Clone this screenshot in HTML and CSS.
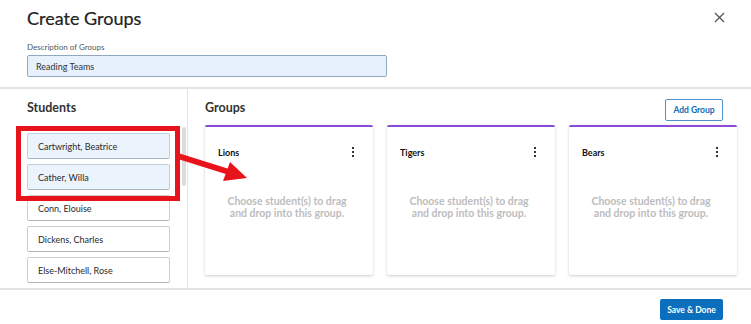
FILE: index.html
```html
<!DOCTYPE html>
<html lang="en">

<head>
    <meta charset="UTF-8">
    <meta name="viewport" content="width=device-width, initial-scale=1.0">
    <title>Create Groups</title>
    <link rel="stylesheet" href="styles.css">
</head>

<body>
    <div class="modal">
        <div class="header">
            <h1 class="title">Create Groups</h1>
            <button class="closeBtn" aria-label="Close">
                <svg width="11" height="11" viewBox="0 0 11 11">
                    <path d="M1 1 L10 10 M10 1 L1 10" stroke="#555" stroke-width="1.3" fill="none" />
                </svg>
            </button>
            <label class="descLabel" for="desc">Description of Groups</label>
            <input type="text" id="desc" class="descInput" value="Reading Teams">
        </div>

        <div class="main">
            <div class="students">
                <h2 class="panelTitle">Students</h2>
                <div class="studentList">
                    <div class="student selected">Cartwright, Beatrice</div>
                    <div class="student selected">Cather, Willa</div>
                    <div class="student">Conn, Elouise</div>
                    <div class="student">Dickens, Charles</div>
                    <div class="student">Else-Mitchell, Rose</div>
                    <div class="student"></div>
                </div>
                <div class="scrollThumb"></div>
            </div>

            <div class="groups">
                <div class="groupsHead">
                    <h2 class="panelTitle">Groups</h2>
                    <button class="addBtn">Add Group</button>
                </div>
                <div class="cards">
                    <div class="card">
                        <div class="cardHead">
                            <span class="cardName">Lions</span>
                            <span class="kebab"><i></i><i></i><i></i></span>
                        </div>
                        <p class="empty">Choose student(s) to drag and drop into this group.</p>
                    </div>
                    <div class="card">
                        <div class="cardHead">
                            <span class="cardName">Tigers</span>
                            <span class="kebab"><i></i><i></i><i></i></span>
                        </div>
                        <p class="empty">Choose student(s) to drag and drop into this group.</p>
                    </div>
                    <div class="card">
                        <div class="cardHead">
                            <span class="cardName">Bears</span>
                            <span class="kebab"><i></i><i></i><i></i></span>
                        </div>
                        <p class="empty">Choose student(s) to drag and drop into this group.</p>
                    </div>
                </div>
            </div>
        </div>

        <div class="footer">
            <button class="saveBtn">Save &amp; Done</button>
        </div>
    </div>

    <!-- annotation drawn over the screenshot -->
    <div class="highlight"></div>
    <svg class="arrow" width="751" height="324" viewBox="0 0 751 324">
        <line x1="178" y1="156" x2="229" y2="172" stroke="#e8141c" stroke-width="6" />
        <polygon points="247,178 223,181 230,162" fill="#e8141c" />
    </svg>
</body>

</html>
```

FILE: styles.css
```css
body {
    margin: 0;
    padding: 0;
    font-family: 'Lato', 'Open Sans', sans-serif;
    background-color: #fff;
    color: #333;
}

.modal {
    width: 751px;
    height: 324px;
    overflow: hidden;
}

.header {
    position: relative;
    padding: 7px 27px 10px;
    display: flex;
    flex-direction: column;
    align-items: flex-start;
}

.title {
    margin: 0;
    font-size: 18px;
    line-height: 22px;
    font-weight: 400;
    color: #222;
    -webkit-text-stroke: 0.2px #222;
}

.closeBtn {
    position: absolute;
    top: 12px;
    right: 26px;
    padding: 0;
    border: none;
    background: none;
    width: 11px;
    height: 11px;
    cursor: pointer;
}

.closeBtn svg {
    display: block;
}

.descLabel {
    margin-top: 13px;
    font-size: 8px;
    line-height: 10px;
    color: #555;
}

.descInput {
    margin-top: 3px;
    width: 360px;
    height: 22px;
    box-sizing: border-box;
    padding: 0 8px;
    border: 1px solid #8fa9c3;
    border-radius: 2px;
    background-color: #e7f1fc;
    font-family: inherit;
    font-size: 9px;
    color: #333;
}

.main {
    display: flex;
    height: 199px;
    border-top: 2px solid #e3e3e3;
    border-bottom: 2px solid #e3e3e3;
}

.students {
    position: relative;
    width: 188px;
    box-sizing: border-box;
    padding: 11px 17px 0 27px;
    border-right: 1px solid #e3e3e3;
    overflow: hidden;
}

.panelTitle {
    margin: 0;
    font-size: 12.5px;
    line-height: 16px;
    font-weight: 700;
    color: #333;
}

.groupsHead .panelTitle {
    margin-top: 1px;
}

.studentList {
    margin-top: 17px;
    display: flex;
    flex-direction: column;
    gap: 5px;
}

.student {
    height: 26px;
    box-sizing: border-box;
    padding-left: 10px;
    display: flex;
    align-items: center;
    flex-shrink: 0;
    border: 1px solid #cfcfcf;
    border-bottom-color: #b5b5b5;
    border-radius: 2px;
    background-color: #fff;
    font-size: 9px;
    color: #2a2a2a;
}

.student.selected {
    background-color: #ebf3fd;
    border-color: #c2cfdc;
    border-bottom-color: #aab8c6;
}

.scrollThumb {
    position: absolute;
    top: 38px;
    right: 1px;
    width: 4px;
    height: 59px;
    border-radius: 2px;
    background-color: #dcdcdc;
}

.groups {
    flex: 1;
    padding: 10px 0 0 17px;
}

.groupsHead {
    display: flex;
    justify-content: space-between;
    align-items: flex-start;
    padding-right: 28px;
}

.addBtn {
    width: 58px;
    height: 22px;
    padding: 0;
    border: 1px solid #4a93cf;
    border-radius: 2px;
    background-color: #fff;
    color: #0c6cb5;
    font-family: inherit;
    font-size: 8.5px;
    font-weight: 700;
    cursor: pointer;
}

.cards {
    margin-top: 4px;
    display: flex;
    gap: 14px;
}

.card {
    width: 168px;
    height: 150px;
    box-sizing: border-box;
    border-top: 2px solid #8a4cd8;
    border-radius: 2px;
    background-color: #fff;
    box-shadow: 0 1px 3px rgba(0, 0, 0, 0.2);
    padding: 19px 17px 0 13px;
}

.cardHead {
    display: flex;
    justify-content: space-between;
    align-items: center;
    height: 12px;
}

.cardName {
    font-size: 9px;
    font-weight: 700;
    color: #111;
}

.kebab {
    display: flex;
    flex-direction: column;
    gap: 2px;
    width: 7px;
    align-items: center;
}

.kebab i {
    display: block;
    width: 2px;
    height: 2px;
    background-color: #333;
}

.empty {
    margin: 37px 0 0;
    padding: 0 4px;
    text-align: center;
    font-size: 10.5px;
    line-height: 12px;
    font-weight: 700;
    color: #bdbdbd;
}

.footer {
    display: flex;
    justify-content: flex-end;
    padding: 9px 28px 0 0;
}

.saveBtn {
    width: 63px;
    height: 21px;
    padding: 0;
    border: none;
    border-radius: 2px;
    background-color: #0b6fbe;
    color: #fff;
    font-family: inherit;
    font-size: 8.5px;
    font-weight: 700;
    cursor: pointer;
}

.highlight {
    position: absolute;
    left: 16px;
    top: 126px;
    width: 164px;
    height: 75px;
    box-sizing: border-box;
    border: 5px solid #e8141c;
}

.arrow {
    position: absolute;
    left: 0;
    top: 0;
    pointer-events: none;
}
```
